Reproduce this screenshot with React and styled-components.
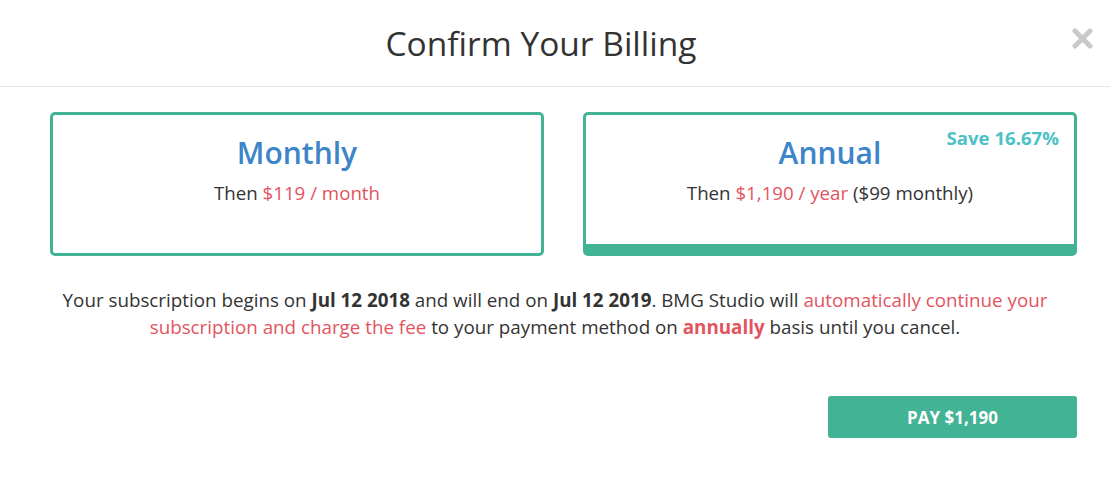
import React from "react";
import styled, { createGlobalStyle } from "styled-components";

const GlobalStyle = createGlobalStyle`
  html, body {
    margin: 0;
    padding: 0;
    background: #fff;
    font-family: "Open Sans", "Liberation Sans", sans-serif;
    color: #333;
  }
`;

const Modal = styled.div`
  width: 1110px;
  height: 477px;
  background: #fff;
  box-sizing: border-box;
`;

const Header = styled.div`
  position: relative;
  height: 86px;
  border-bottom: 1px solid #e5e5e5;
  display: flex;
  align-items: center;
  justify-content: center;
  padding-right: 28px;
`;

const Title = styled.h2`
  margin: 0;
  font-size: 33.5px;
  font-weight: 500;
  color: #333;
`;

const Close = styled.button`
  position: absolute;
  right: 17px;
  top: 28px;
  border: 0;
  background: none;
  padding: 0;
  width: 21px;
  height: 21px;
  cursor: pointer;
  display: flex;
`;

const Body = styled.div`
  padding: 25px 33px 0 50px;
`;

const Plans = styled.div`
  display: grid;
  grid-template-columns: 1fr 1fr;
  gap: 39px;
`;

const Plan = styled.div`
  position: relative;
  height: 144px;
  box-sizing: border-box;
  border: 3px solid #42b394;
  border-bottom-width: ${p => (p.selected ? "12px" : "3px")};
  border-radius: 5px;
  text-align: center;
  padding-top: 18px;
`;

const PlanName = styled.div`
  font-size: 30px;
  font-weight: 600;
  color: #3c85c8;
  line-height: 40px;
`;

const Price = styled.div`
  margin-top: 7px;
  font-size: 18.7px;
  color: #333;
`;

const Red = styled.span`
  color: #e2545f;
  font-weight: ${p => (p.bold ? 700 : 400)};
`;

const Save = styled.div`
  position: absolute;
  top: 10px;
  right: 15px;
  font-size: 18.6px;
  font-weight: 700;
  color: #4cc1c6;
`;

const Note = styled.p`
  margin: 31px 0 0 -17px;
  text-align: center;
  font-size: 18.8px;
  line-height: 27px;
  color: #333;
`;

const Footer = styled.div`
  display: flex;
  justify-content: flex-end;
  margin-top: 55px;
`;

const PayButton = styled.button`
  width: 249px;
  height: 42px;
  border: 0;
  border-radius: 3px;
  background: #42b394;
  color: #fff;
  font-family: "Open Sans", sans-serif;
  font-size: 17px;
  font-weight: 700;
  cursor: pointer;
`;

export default function App() {
  return (
    <>
      <GlobalStyle />
      <Modal>
        <Header>
          <Title>Confirm Your Billing</Title>
          <Close aria-label="Close">
            <svg width="21" height="21" viewBox="0 0 21 21">
              <path
                d="M3 3 L18 18 M18 3 L3 18"
                stroke="#c9c9c9"
                strokeWidth="5"
                strokeLinecap="round"
              />
            </svg>
          </Close>
        </Header>
        <Body>
          <Plans>
            <Plan>
              <PlanName>Monthly</PlanName>
              <Price>
                Then <Red>$119 / month</Red>
              </Price>
            </Plan>
            <Plan selected>
              <Save>Save 16.67%</Save>
              <PlanName>Annual</PlanName>
              <Price>
                Then <Red>$1,190 / year</Red> ($99 monthly)
              </Price>
            </Plan>
          </Plans>
          <Note>
            Your subscription begins on <b>Jul 12 2018</b> and will end on{" "}
            <b>Jul 12 2019</b>. BMG Studio will{" "}
            <Red>automatically continue your subscription and charge the fee</Red>{" "}
            to your payment method on <Red bold>annually</Red> basis until you
            cancel.
          </Note>
          <Footer>
            <PayButton>PAY $1,190</PayButton>
          </Footer>
        </Body>
      </Modal>
    </>
  );
}
